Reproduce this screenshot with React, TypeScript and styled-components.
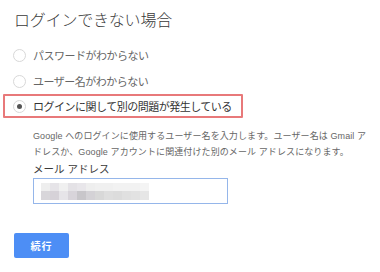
import React from 'react';
import styled, {createGlobalStyle} from 'styled-components';

const GlobalStyle = createGlobalStyle`
  html, body {
    margin: 0;
    padding: 0;
    background: #ffffff;
  }
  body {
    font-family: 'Liberation Sans', 'Noto Sans CJK JP', sans-serif;
  }
`;

const Page = styled.div`
  width: 380px;
  height: 272px;
  box-sizing: border-box;
  padding: 9px 0 0 13px;
  overflow: hidden;
`;

const Title = styled.h1`
  margin: 0 0 0 1px;
  font-size: 16px;
  line-height: 24px;
  font-weight: 300;
  color: #3a3a3a;
  letter-spacing: -0.2px;
`;

const Options = styled.div`
  display: flex;
  flex-direction: column;
  margin-top: 9px;
`;

const Option = styled.label<{$selected?: boolean}>`
  display: flex;
  align-items: center;
  gap: 7px;
  height: ${p => (p.$selected ? '24px' : '26px')};
  box-sizing: border-box;
  font-size: 11px;
  letter-spacing: -0.5px;
  color: ${p => (p.$selected ? '#333333' : '#666666')};
  cursor: pointer;
  ${p =>
    p.$selected &&
    `
    width: 240px;
    margin-left: -10px;
    padding-left: 8px;
    border: 2px solid #e8797a;
    border-radius: 1px;
  `}
`;

const Radio = styled.span<{$checked?: boolean}>`
  position: relative;
  width: 13px;
  height: 13px;
  box-sizing: border-box;
  flex: none;
  border-radius: 50%;
  border: 1px solid #d8d8d8;
  background: #ffffff;

  &::after {
    content: '';
    display: ${p => (p.$checked ? 'block' : 'none')};
    position: absolute;
    left: 3px;
    top: 3px;
    width: 5px;
    height: 5px;
    border-radius: 50%;
    background: #555555;
  }
`;

const Detail = styled.div`
  padding-left: 20px;
  margin-top: 10px;
`;

const Help = styled.p`
  margin: 0;
  font-size: 9px;
  line-height: 16px;
  color: #666666;
  letter-spacing: 0.1px;
  white-space: nowrap;
`;

const FieldLabel = styled.div`
  margin-top: 2px;
  font-size: 10.5px;
  line-height: 14px;
  color: #3a3a3a;
`;

const Input = styled.div`
  margin-top: 2px;
  width: 195px;
  height: 26px;
  box-sizing: border-box;
  border: 1px solid #95b6ea;
  display: flex;
  align-items: center;
  padding-left: 7px;
`;

const Blur = styled.div`
  display: grid;
  grid-template-columns: repeat(12, 9px);
  grid-template-rows: 8px 9px;
`;

const Pixel = styled.span`
  display: block;
`;

const Button = styled.button`
  display: block;
  margin: 29px 0 0 1px;
  width: 55px;
  height: 25px;
  padding: 0;
  border: none;
  border-radius: 2px;
  background: #4d8ef5;
  color: #ffffff;
  font-family: 'Noto Sans CJK JP', sans-serif;
  font-weight: 700;
  font-size: 10px;
  letter-spacing: 1px;
  cursor: pointer;
`;

const blurTop = ['#eeeeee', '#e6e4e8', '#f0f0f0', '#e4e2e6', '#e8e6ea', '#eeeeee', '#f0f0f0', '#f0f0f0', '#f2f2f2', '#f2f2f2', '#f2f2f2', '#f4f4f4'];
const blurBottom = ['#d8d6da', '#d6d2d8', '#e6e4e8', '#d8d4da', '#c8c6ca', '#d4d2d6', '#d8d8d8', '#dedede', '#dcdcdc', '#e0e0e0', '#e2e2e2', '#e6e6e6'];

export default function App() {
  return (
    <Page>
      <GlobalStyle />
      <Title>ログインできない場合</Title>

      <Options>
        <Option>
          <Radio />
          パスワードがわからない
        </Option>
        <Option>
          <Radio />
          ユーザー名がわからない
        </Option>
        <Option $selected>
          <Radio $checked />
          ログインに関して別の問題が発生している
        </Option>
      </Options>

      <Detail>
        <Help>
          Google へのログインに使用するユーザー名を入力します。ユーザー名は Gmail ア
          <br />
          ドレスか、Google アカウントに関連付けた別のメール アドレスになります。
        </Help>
        <FieldLabel>メール アドレス</FieldLabel>
        <Input>
          <Blur>
            {blurTop.concat(blurBottom).map((c, i) => (
              <Pixel key={i} style={{background: c}} />
            ))}
          </Blur>
        </Input>
      </Detail>

      <Button>続行</Button>
    </Page>
  );
}
